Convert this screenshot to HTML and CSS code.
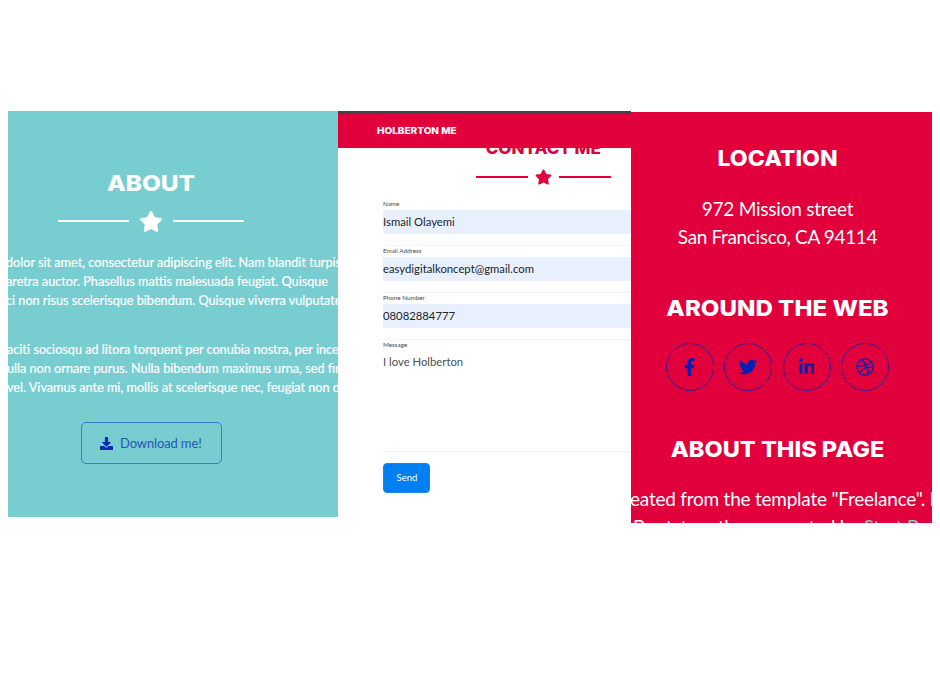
FILE: index.html
```html
<!DOCTYPE html>
<html lang="en">
<head>
<meta charset="utf-8">
<title>Holberton Me</title>
<link rel="stylesheet" href="styles.css">
</head>
<body>
<svg class="defs" width="0" height="0">
  <symbol id="star" viewBox="0 0 576 512"><path d="M259.3 17.8L194 150.2 47.9 171.5c-26.2 3.800-36.700 36.100-17.700 54.600l105.700 103-25 145.500c-4.500 26.300 23.200 46 46.400 33.700L288 439.600l130.700 68.700c23.200 12.200 50.900-7.400 46.400-33.700l-25-145.500 105.700-103c19-18.500 8.500-50.800-17.700-54.600L382 150.200 316.700 17.800c-11.700-23.600-45.600-23.900-57.400 0z"/></symbol>
</svg>
<main class="board">
  <section class="about">
    <h2 class="title">About</h2>
    <div class="divider"><i></i><svg><use href="#star"/></svg><i></i></div>
    <div class="copy">
      <p class="l1">dolor sit amet, consectetur adipiscing elit. Nam blandit turpis</p>
      <p class="l2">aretra auctor. Phasellus mattis malesuada feugiat. Quisque</p>
      <p class="l3">ci non risus scelerisque bibendum. Quisque viverra vulputate</p>
    </div>
    <div class="copy">
      <p class="l4">aciti sociosqu ad litora torquent per conubia nostra, per ince</p>
      <p class="l5">ulla non ornare purus. Nulla bibendum maximus urna, sed fin</p>
      <p class="l6">vel. Vivamus ante mi, mollis at scelerisque nec, feugiat non d</p>
    </div>
    <a class="download">
      <svg viewBox="0 0 512 512"><path d="M216 0h80c13.300 0 24 10.700 24 24v168h87.700c17.800 0 26.700 21.500 14.100 34.100L269.700 378.300c-7.500 7.500-19.800 7.500-27.300 0L90.100 226.100c-12.600-12.600-3.700-34.100 14.100-34.100H192V24c0-13.300 10.700-24 24-24zm296 376v112c0 13.300-10.700 24-24 24H24c-13.300 0-24-10.700-24-24V376c0-13.300 10.700-24 24-24h146.700l49 49c20.100 20.100 52.500 20.100 72.600 0l49-49H488c13.300 0 24 10.700 24 24z"/></svg>
      <span>Download me!</span>
    </a>
  </section>

  <section class="contact">
    <header class="nav"><span>Holberton Me</span></header>
    <div class="heading"><h2>Contact Me</h2></div>
    <div class="divider"><i></i><svg><use href="#star"/></svg><i></i></div>
    <form class="form">
      <div class="field"><label>Name</label><div class="value">Ismail Olayemi</div></div>
      <div class="field"><label>Email Address</label><div class="value">easydigitalkoncept@gmail.com</div></div>
      <div class="field"><label>Phone Number</label><div class="value phone">08082884777</div></div>
      <div class="field message"><label>Message</label><div class="value">I love Holberton</div></div>
      <button class="send" type="button">Send</button>
    </form>
  </section>

  <section class="footer">
    <h3 class="location">Location</h3>
    <address><span class="street">972 Mission street</span><span class="city">San Francisco, CA 94114</span></address>
    <h3 class="around">Around the Web</h3>
    <nav class="social">
      <a><svg viewBox="0 0 320 512"><path d="M279.140 288l14.220-92.660h-88.910v-60.130c0-25.350 12.420-50.060 52.240-50.060h40.420V6.260S260.430 0 225.360 0c-73.220 0-121.080 44.380-121.080 124.720v70.620H22.890V288h81.390v224h100.170V288z"/></svg></a>
      <a><svg viewBox="0 0 512 512"><path d="M459.370 151.716c.325 4.548.325 9.097.325 13.645 0 138.720-105.583 298.558-298.558 298.558-59.452 0-114.680-17.219-161.137-47.106 8.447.974 16.568 1.299 25.340 1.299 49.055 0 94.213-16.568 130.274-44.832-46.132-.975-84.792-31.188-98.112-72.772 6.498.974 12.995 1.624 19.818 1.624 9.421 0 18.843-1.300 27.614-3.573-48.081-9.747-84.143-51.980-84.143-102.985v-1.299c13.969 7.797 30.214 12.670 47.431 13.319-28.264-18.843-46.781-51.005-46.781-87.391 0-19.492 5.197-37.360 14.294-52.954 51.655 63.675 129.300 105.258 216.365 109.807-1.624-7.797-2.599-15.918-2.599-24.040 0-57.828 46.782-104.934 104.934-104.934 30.213 0 57.502 12.670 76.670 33.137 23.715-4.548 46.456-13.320 66.599-25.340-7.798 24.366-24.366 44.833-46.132 57.827 21.117-2.273 41.584-8.122 60.426-16.243-14.292 20.791-32.161 39.308-52.628 54.253z"/></svg></a>
      <a><svg viewBox="0 0 448 512"><path d="M100.280 448H7.400V148.900h92.880zM53.790 108.100C24.090 108.100 0 83.500 0 53.800a53.790 53.790 0 0 1 107.580 0c0 29.700-24.100 54.300-53.790 54.300zM447.900 448h-92.680V302.400c0-34.700-.7-79.200-48.290-79.200-48.290 0-55.690 37.700-55.690 76.700V448h-92.780V148.900h89.080v40.800h1.300c12.400-23.500 42.690-48.300 87.880-48.300 94 0 111.280 61.900 111.280 142.300V448z"/></svg></a>
      <a><svg viewBox="0 0 512 512"><path d="M256 8C119.252 8 8 119.252 8 256s111.252 248 248 248 248-111.252 248-248S392.748 8 256 8zm163.970 114.366c29.503 36.046 47.369 81.957 47.835 131.955-6.984-1.477-77.018-15.682-147.502-6.818-5.752-14.041-11.181-26.393-18.617-41.614 78.321-31.977 113.818-77.482 118.284-83.523zM396.421 97.870c-3.810 5.427-35.697 48.286-111.021 76.519-34.712-63.776-73.185-116.168-79.040-124.008 67.176-16.193 137.966 1.270 190.061 47.489zm-230.480-33.250c5.585 7.659 43.438 60.116 78.537 122.509-99.087 26.313-186.360 25.934-195.834 25.809C62.380 147.205 106.678 92.573 165.941 64.620zM44.170 256.323c0-2.166.043-4.322.108-6.473 9.268.190 111.920 1.513 217.706-30.146 6.064 11.868 11.857 23.915 17.174 35.949-76.599 21.575-146.194 83.527-180.531 142.306C64.794 360.405 44.170 310.730 44.170 256.323zm81.807 167.113c22.127-45.233 82.178-103.622 167.579-132.756 29.740 77.283 42.039 142.053 45.189 160.638-68.112 29.013-150.015 21.053-212.768-27.882zm248.380 8.489c-2.171-12.886-13.446-74.897-41.152-151.033 66.380-10.626 124.700 6.768 131.947 9.055-9.442 58.941-43.273 109.844-90.795 141.978z"/></svg></a>
    </nav>
    <h3 class="page">About this page</h3>
    <div class="credits">
      <p class="c1">eated from the template "Freelance". It</p>
      <p class="c2">Bootstrap theme created by <a>Start Bo</a></p>
    </div>
  </section>
</main>
</body>
</html>
```
FILE: styles.css
```css
* { box-sizing: border-box; }
body { margin: 0; background: #fff; font-family: Lato, "Liberation Sans", sans-serif; overflow: hidden; }
h2, h3, p { margin: 0; font-weight: normal; white-space: nowrap; }
.defs { display: block; }
.board { display: grid; grid-template-columns: 329.500px 293.500px 301px; margin: 111px 8px 0; align-items: start; }
h2, h3, .nav { font-family: Inter, "Open Sans", sans-serif; font-weight: 800; text-transform: uppercase; }
svg { fill: currentColor; }

.about { height: 406px; overflow: hidden; background: #78cdd1; color: #fff; padding-top: 57px; }
.title { width: 286px; text-align: center; font-size: 22px; line-height: 30px; transform: scaleX(1.11); }
.divider { display: flex; align-items: center; }
.divider i { height: 2px; background: currentColor; }
.about .divider { margin: 11px 0 0 50px; height: 24px; gap: 10px; }
.about .divider i { width: 71px; }
.about .divider svg { width: 24px; height: 21px; }
.copy { margin-top: 20px; font-size: 12.670px; line-height: 19px; -webkit-text-stroke: 0.200px currentColor; }
.copy + .copy { margin-top: 30px; }
.l1, .l2, .l3 { margin-left: -2px; }
.l4, .l5, .l6 { margin-left: -1px; }
.download { display: flex; align-items: center; width: 141px; height: 42px; margin: 25px 0 0 72.500px; padding-left: 18.500px; gap: 7px; border: 1px solid #357fc4; border-radius: 5px; color: #0a2cad; font-size: 13px; }
.download svg { width: 13px; height: 13px; }
.download span { color: #2256b4; letter-spacing: -0.130px; }

.contact { height: 412px; overflow: hidden; background: #fff; color: #e1003c; }
.nav { height: 37px; border-top: 3px solid #444; background: #e1003c; color: #fff; padding-left: 39px; font-size: 9px; line-height: 34px; }
.nav span { display: inline-block; transform: scaleX(1.11); transform-origin: left; }
.heading { height: 9px; overflow: hidden; display: flex; align-items: flex-end; justify-content: center; padding: 0 0 2px 118px; }
.heading h2 { font-size: 16px; line-height: 14px; transform: scaleX(1.06); }
.contact .divider { margin: 11px 0 0 138.500px; height: 18px; gap: 7px; }
.contact .divider i { width: 52px; }
.contact .divider svg { width: 17px; height: 16px; }
.form { margin: 13px 0 0 45.500px; color: #212529; }
.field { height: 47px; border-bottom: 1px solid #f4f4f5; }
.field label { display: block; height: 11px; font-size: 6.300px; line-height: 10px; color: #444a50; }
.value { height: 24px; background: #e8f0fe; font-size: 11.300px; line-height: 23px; }
.message { height: 112px; }
.message .value { background: none; color: #495057; line-height: 21px; }
.send { display: block; width: 47px; height: 30px; margin-top: 11px; padding: 0 0 2px 1px; border: 1px solid #1c86e4; border-radius: 4px; background: #0080f0; color: #fff; font: 9.500px Lato, sans-serif; }

.footer { height: 411px; margin-top: 1px; overflow: hidden; background: #e1003c; color: #fff; font-size: 19px; line-height: 28px; letter-spacing: -0.230px; }
.footer h3 { width: 293px; text-align: center; font-size: 22px; line-height: 30px; letter-spacing: 0; }
.footer .location { margin-top: 31px; transform: scaleX(1.05); }
address { display: flex; flex-direction: column; align-items: center; width: 293px; margin-top: 22px; font-style: normal; }
.city { letter-spacing: -0.350px; }
.footer .around { margin-top: 42px; transform: scaleX(1.095); }
.social { display: flex; gap: 10.500px; margin: 20px 0 0 34.500px; }
.social a { display: flex; align-items: center; justify-content: center; width: 48px; height: 48px; border: 1.500px solid #3c1b90; border-radius: 50%; color: #0a1fae; }
.social svg { height: 18px; }
.social a:first-child svg { margin-left: 1px; }
.footer .page { margin-top: 43px; transform: scaleX(1.07); }
.credits { margin-top: 21px; }
.c1 { margin-left: -1px; }
.c2 { margin-left: 2px; }
.c2 a { color: #78cdd1; }
```
